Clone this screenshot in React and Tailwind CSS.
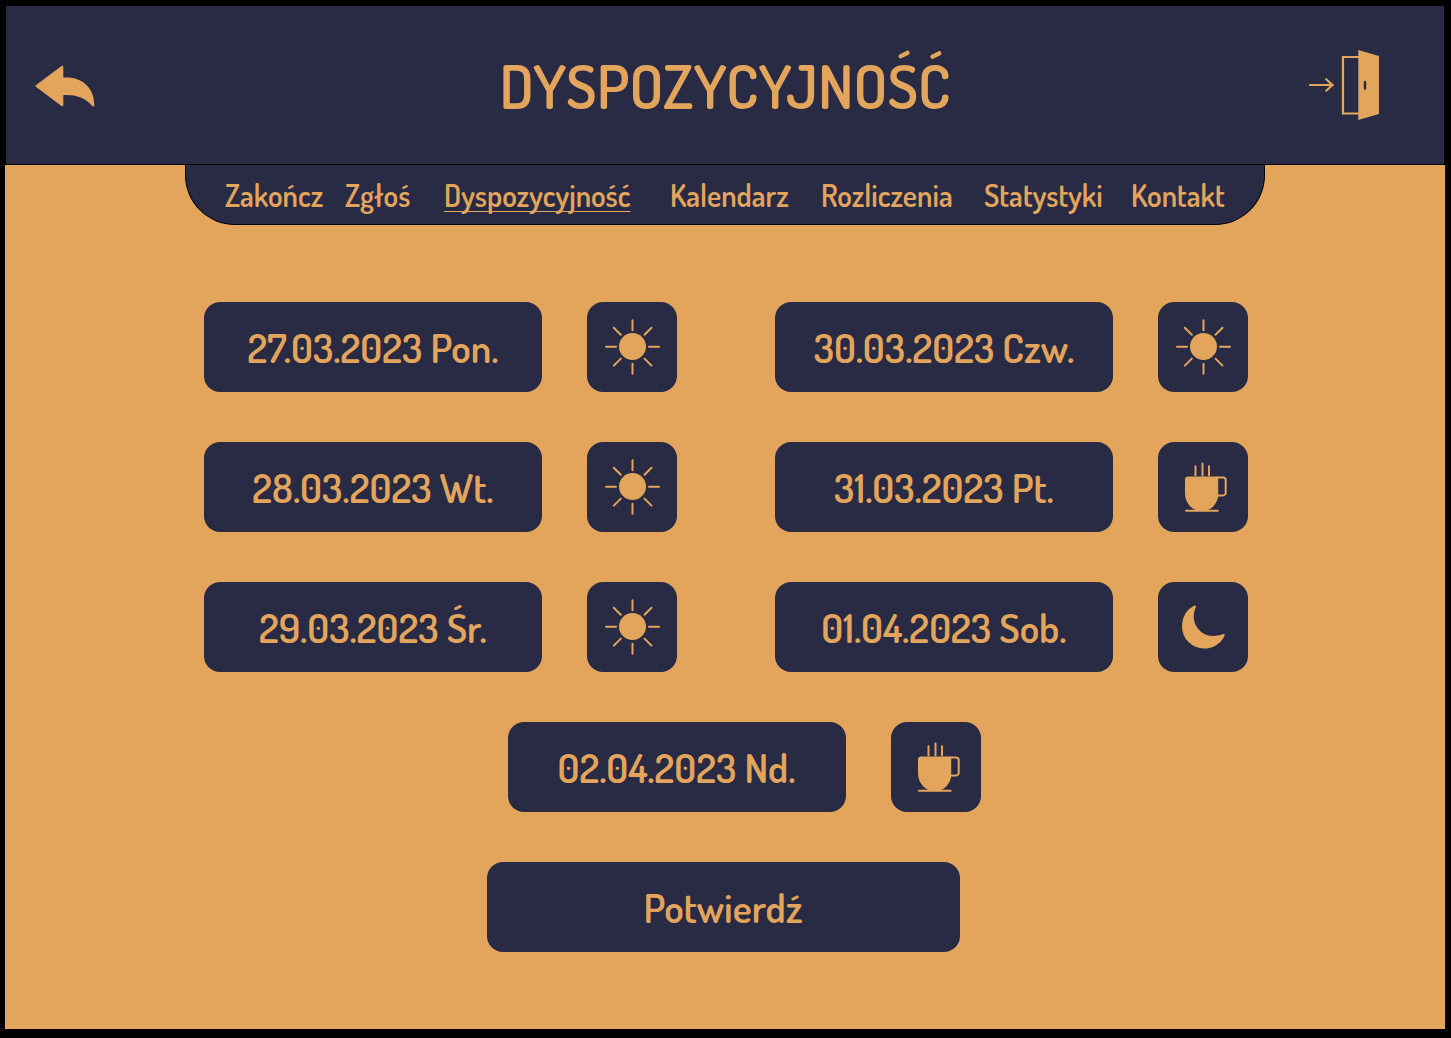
import React from "react";

const leftDays = [
  { date: "27.03.2023 Pon.", shift: "day" },
  { date: "28.03.2023 Wt.", shift: "day" },
  { date: "29.03.2023 Śr.", shift: "day" },
];

const rightDays = [
  { date: "30.03.2023 Czw.", shift: "day" },
  { date: "31.03.2023 Pt.", shift: "off" },
  { date: "01.04.2023 Sob.", shift: "night" },
];

const links = [
  { label: "Zakończ", cell: "w-[120px]" },
  { label: "Zgłoś", cell: "w-[99px]" },
  { label: "Dyspozycyjność", cell: "w-[226px]", current: true },
  { label: "Kalendarz", cell: "w-[151px]" },
  { label: "Rozliczenia", cell: "w-[163px]" },
  { label: "Statystyki", cell: "w-[147px]" },
  { label: "Kontakt", cell: "w-[94px]" },
];

function SunIcon() {
  return (
    <svg viewBox="0 0 90 90" className="size-full" aria-hidden="true">
      <circle cx="45.5" cy="44.5" r="13.5" fill="currentColor" />
      <path
        d="M45.500 18.200v10M45.500 61.800v10M19 44.800h10M62 44.800h10M26.800 25.800l7 7M64.500 25.800l-7 7M26.800 63.600l7-7M64.500 63.600l-7-7"
        stroke="currentColor"
        strokeWidth="2"
        strokeLinecap="round"
        fill="none"
      />
    </svg>
  );
}

function CupIcon() {
  return (
    <svg viewBox="0 0 90 90" className="size-full" aria-hidden="true">
      <path
        d="M30 34.500h29a1.500 1.500 0 0 1 1.500 1.500V51c0 8-4.500 14.500-10.500 17H38C31.500 65.500 27 59 27 51V37.500a3 3 0 0 1 3-3Z"
        fill="currentColor"
      />
      <path
        d="M59.500 35.500H65a2.700 2.700 0 0 1 2.700 2.700v12.500a2.700 2.700 0 0 1-2.700 2.700h-5.500M37.500 24.300v9M44.500 21.500v12M51 24.300v9M28 68.800h31.700"
        stroke="currentColor"
        strokeWidth="2"
        strokeLinecap="round"
        fill="none"
      />
      <path d="M60.500 36.500v16" stroke="#292b45" strokeWidth="0.6" />
    </svg>
  );
}

function MoonIcon() {
  return (
    <svg viewBox="0 0 90 90" className="size-full" aria-hidden="true">
      <path
        d="M36.400 23.700C28.700 27 24 35 24 44.500a22 22 0 0 0 22 22c9 0 16.500-4.500 20.500-12.600.6-1.300-.3-2.200-1.700-1.600-10.500 3.700-20.500 1.300-26-7.300-3.800-6-4-13.500-1-19.700.6-1.200-.1-2-1.400-1.600Z"
        fill="currentColor"
      />
    </svg>
  );
}

const shifts = {
  day: { name: "Dzień", Icon: SunIcon },
  off: { name: "Wolne", Icon: CupIcon },
  night: { name: "Noc", Icon: MoonIcon },
};

function DayRow({ date, shift }) {
  const { name, Icon } = shifts[shift];
  return (
    <div className="flex gap-[45px]">
      <div className="flex h-[90px] w-[338px] items-center justify-center rounded-2xl bg-[#292b45] text-[40px] whitespace-nowrap">
        {date}
      </div>
      <button
        type="button"
        aria-label={`${date} ${name}`}
        className="size-[90px] cursor-pointer rounded-2xl bg-[#292b45]"
      >
        <Icon />
      </button>
    </div>
  );
}

export default function App() {
  return (
    <div className="flex min-h-screen flex-col bg-black pt-[5px] pr-[6px] pb-[9px] pl-[5px] font-['Dosis','Roboto',sans-serif] font-semibold text-[#e3a55c]">
      <header className="grid h-40 grid-cols-[1fr_auto_1fr] items-center border border-black bg-[#292b45]">
        <button
          type="button"
          aria-label="Wstecz"
          className="ml-[29px] cursor-pointer justify-self-start"
        >
          <svg viewBox="0 0 60 44" className="h-11 w-[60px]" aria-hidden="true">
            <path
              d="M1.200 22 26.500 2.900Q28.300 2 28.300 4v10.600C46 13 59.500 24 59.300 42.500q-.5 1.800-2 .4C50 34.500 40 31.500 28.300 32.200v9.600q0 2-1.800 1.100L1.200 24q-1.500-1 0-2Z"
              fill="currentColor"
            />
          </svg>
        </button>
        <h1 className="text-[60px] leading-none font-semibold">DYSPOZYCYJNOŚĆ</h1>
        <button
          type="button"
          aria-label="Wyloguj"
          className="mr-16 cursor-pointer justify-self-end"
        >
          <svg viewBox="0 0 72 70" className="h-[70px] w-[72px]" aria-hidden="true">
            <path
              d="M2 35h23M18.200 29.200l6.300 5.800-6.300 5.800M52 7H35v56.500h17"
              stroke="currentColor"
              strokeWidth="2.200"
              fill="none"
              strokeLinecap="round"
            />
            <path d="M50.300 0 71 6v58l-20.700 6Z" fill="currentColor" />
            <path d="M57 32v6.500" stroke="#292b45" strokeWidth="2.400" strokeLinecap="round" />
          </svg>
        </button>
      </header>
      <main className="flex grow flex-col items-center bg-[#e3a55c]">
        <nav className="flex h-[60px] w-[1080px] max-w-full items-center rounded-b-[50px] border border-t-0 border-black bg-[#292b45] pt-0.5 pl-[39px] text-[30px]">
          {links.map(({ label, cell, current }) => (
            <span key={label} className={cell}>
              <a
                href="#"
                aria-current={current ? "page" : undefined}
                className={
                  current
                    ? "underline decoration-1 underline-offset-4 [text-decoration-skip-ink:none]"
                    : ""
                }
              >
                {label}
              </a>
            </span>
          ))}
        </nav>
        <div className="mt-[77px] flex flex-wrap justify-center gap-[98px] pl-0.5">
          <div className="flex flex-col gap-[50px]">
            {leftDays.map((day) => (
              <DayRow key={day.date} {...day} />
            ))}
          </div>
          <div className="flex flex-col gap-[50px]">
            {rightDays.map((day) => (
              <DayRow key={day.date} {...day} />
            ))}
          </div>
        </div>
        <div className="mt-[50px] pl-[38px]">
          <DayRow date="02.04.2023 Nd." shift="off" />
        </div>
        <button
          type="button"
          className="my-[50px] mr-1 h-[90px] w-[473px] cursor-pointer rounded-2xl bg-[#292b45] text-[40px]"
        >
          Potwierdź
        </button>
      </main>
    </div>
  );
}
